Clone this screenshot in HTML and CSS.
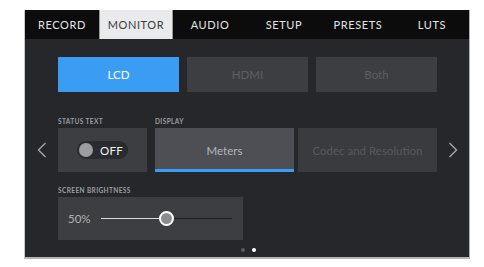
FILE: index.html
```html
<!DOCTYPE html>
<html>
<head>
<meta charset="utf-8">
<link rel="stylesheet" href="styles.css">
</head>
<body>
<div class="frame">
  <nav class="tabs">
    <div class="tab">RECORD</div>
    <div class="tab active">MONITOR</div>
    <div class="tab">AUDIO</div>
    <div class="tab">SETUP</div>
    <div class="tab">PRESETS</div>
    <div class="tab">LUTS</div>
  </nav>
  <main class="content">
    <div class="seg">
      <div class="seg-btn on">LCD</div>
      <div class="seg-btn">HDMI</div>
      <div class="seg-btn">Both</div>
    </div>
    <div class="row2">
      <div class="arrow left">
        <svg width="10" height="16" viewBox="0 0 10 16"><path d="M8.5 1 L1.5 8 L8.5 15" fill="none" stroke="#a6a7ab" stroke-width="1.4"/></svg>
      </div>
      <div class="group status">
        <div class="label">STATUS TEXT</div>
        <div class="box toggle-box">
          <div class="toggle"><span class="knob"></span><span class="toggle-text">OFF</span></div>
        </div>
      </div>
      <div class="group display">
        <div class="label">DISPLAY</div>
        <div class="opts">
          <div class="opt sel">Meters</div>
          <div class="opt">Codec and Resolution</div>
        </div>
      </div>
      <div class="arrow right">
        <svg width="10" height="16" viewBox="0 0 10 16"><path d="M1.5 1 L8.5 8 L1.5 15" fill="none" stroke="#a6a7ab" stroke-width="1.4"/></svg>
      </div>
    </div>
    <div class="group bright">
      <div class="label">SCREEN BRIGHTNESS</div>
      <div class="box slider-box">
        <span class="pct">50%</span>
        <div class="slider">
          <div class="fill"></div>
          <div class="thumb"></div>
          <div class="rest"></div>
        </div>
      </div>
    </div>
    <div class="dots"><span class="dot"></span><span class="dot cur"></span></div>
  </main>
</div>
</body>
</html>
```
FILE: styles.css
```css
* { box-sizing: border-box; }
html, body { margin: 0; padding: 0; background: #ffffff; }
body { font-family: Lato, "Open Sans", sans-serif; padding: 10px 0 0 24px; }
.frame {
  width: 446px;
  height: 249px;
  background: #26272b;
  border-right: 1px solid #b0b0b0;
  border-bottom: 2px solid #b5b5b5;
  border-left: 1px solid #c8c8c8;
  display: flex;
  flex-direction: column;
  overflow: hidden;
}
.tabs {
  display: grid;
  grid-template-columns: repeat(6, 1fr);
  height: 29px;
  background: #0c0c0d;
}
.tab {
  display: flex;
  align-items: center;
  justify-content: center;
  color: #e4e4e6;
  font-size: 11px;
  letter-spacing: 0.6px;
  font-weight: 400;
}
.tab.active {
  background: #e9eaec;
  color: #3a3b3e;
  border-left: 1px solid #9a9a9a;
  border-right: 1px solid #9a9a9a;
}
.content { padding: 18px 32px 0 33px; display: flex; flex-direction: column; }
.seg { display: grid; grid-template-columns: repeat(3, 121px); gap: 8px; }
.seg-btn {
  height: 35px;
  background: #3d3e42;
  color: #5d5e63;
  font-size: 11.5px;
  display: flex; align-items: center; justify-content: center;
}
.seg-btn.on { background: #3a9cf2; color: #ffffff; }
.row2 { display: flex; margin: 26px -32px 0 -33px; gap: 8px; }
.row2 > * { flex: none; }
.arrow { width: 25px; display: flex; align-items: flex-end; justify-content: flex-end; padding-bottom: 14px; padding-right: 3px; }
.arrow.right { justify-content: flex-start; width: 24px; padding-left: 3px; padding-right: 0; }
.label {
  height: 10px;
  font-size: 6.5px;
  font-weight: 700;
  letter-spacing: 0.4px;
  color: #9d9ea2;
  line-height: 8px;
}
.box { background: #3d3e42; }
.toggle-box { width: 89px; height: 44px; display: flex; align-items: center; justify-content: center; }
.toggle {
  width: 51px; height: 18px; border-radius: 9px;
  background: #2a2b2e;
  display: flex; align-items: center; padding-left: 2px;
}
.knob { width: 14px; height: 14px; border-radius: 50%; background: #9c9da1; }
.toggle-text { color: #f2f2f2; font-size: 11.5px; font-weight: 400; margin-left: 7px; letter-spacing: 0.3px; }
.opts { display: flex; gap: 4px; }
.opt {
  width: 139px; height: 44px;
  background: #3a3b3f;
  color: #58595d;
  font-size: 11.5px;
  display: flex; align-items: center; justify-content: center;
}
.opt.sel { background: #4e4f54; color: #b4b5b9; border-bottom: 3px solid #3a9cf2; padding-top: 3px; }
.bright { margin-top: 15px; }
.slider-box { width: 185px; height: 43px; display: flex; align-items: center; padding-left: 10px; }
.pct { color: #b0b1b5; font-size: 11.5px; width: 33px; flex: none; }
.slider { display: flex; align-items: center; width: 131px; flex: none; }
.fill { width: 58px; height: 1.5px; background: #dcdcdc; flex: none; }
.thumb { width: 15px; height: 15px; border-radius: 50%; background: #8c8d91; border: 2.5px solid #ffffff; flex: none; }
.rest { flex: 1; height: 1.5px; background: #1d1e21; }
.dots { display: flex; justify-content: center; gap: 7px; margin-top: 8px; padding-left: 2px; }
.dot { width: 4px; height: 4px; border-radius: 50%; background: #5b5c60; }
.dot.cur { background: #ffffff; }
```
